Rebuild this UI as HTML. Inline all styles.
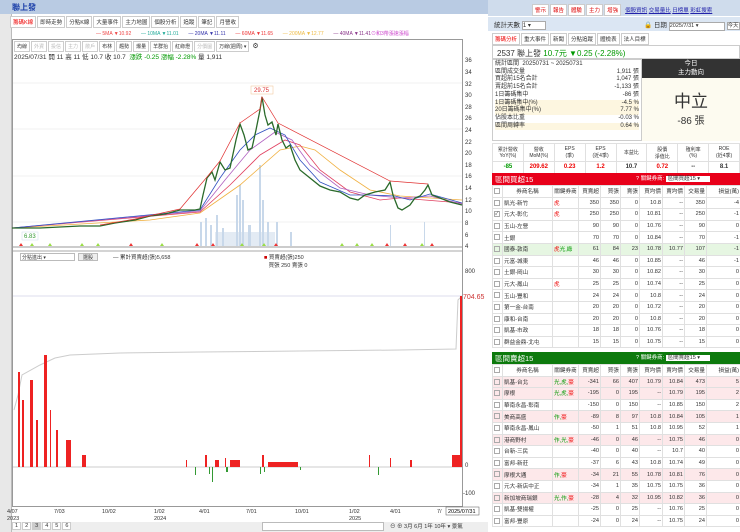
<!DOCTYPE html><html><head><meta charset="utf-8"><style>
*{box-sizing:border-box;margin:0;padding:0}
body{width:740px;height:532px;overflow:hidden;background:#fff;font-family:"Liberation Sans","Noto Sans CJK TC",sans-serif;font-size:7px;color:#333;position:relative}
.a{position:absolute}
.tab{display:inline-block;border:1px solid #ccc;padding:1px 2px;margin-right:1px;background:#fff;font-size:5.5px}
table{border-collapse:collapse;width:248px;font-size:5.6px;table-layout:fixed}
td{border:1px solid #e0e0e0;height:11.6px;padding:0 1px;text-align:right;white-space:nowrap;overflow:hidden}
td.l{text-align:left}
.cb{display:inline-block;width:6px;height:6px;border:1px solid #aaa;vertical-align:middle;font-size:5px;line-height:5px}
.r{color:#e00}.g{color:#090}
.pk td{background:#fde8ea}
</style></head><body>
<div class="a" style="left:0;top:0;width:12px;height:532px;background:#e8e8e8;border-right:1px solid #bbb"></div>
<div class="a" style="left:0;top:0;width:488px;height:14px;background:#b9cbe3"></div>
<div class="a" style="left:12px;top:2px;font-size:8px;color:#1a3ea8;font-weight:bold">聯上發</div>
<div class="a" style="left:10px;top:16px;white-space:nowrap"><span class="tab" style="color:#e00">籌碼K線</span><span class="tab">即時走勢</span><span class="tab">分點K線</span><span class="tab">大量事件</span><span class="tab">主力地圖</span><span class="tab">個股分析</span><span class="tab">追蹤</span><span class="tab">筆記</span><span class="tab">月營收</span></div>
<div class="a" style="left:96px;top:30px;font-size:5px;white-space:nowrap"><span style="color:#e44">— 5MA ▼10.92</span>&nbsp;&nbsp;&nbsp;&nbsp;&nbsp;&nbsp; <span style="color:#2a9">— 10MA ▼11.01</span>&nbsp;&nbsp;&nbsp;&nbsp;&nbsp;&nbsp; <span style="color:#33a">— 20MA ▼11.11</span>&nbsp;&nbsp;&nbsp;&nbsp;&nbsp;&nbsp; <span style="color:#e33">— 60MA ▼11.65</span>&nbsp;&nbsp;&nbsp;&nbsp;&nbsp;&nbsp; <span style="color:#eb4">— 200MA ▼12.77</span>&nbsp;&nbsp;&nbsp;&nbsp;&nbsp;&nbsp; <span style="color:#838">— 40MA ▼11.41</span><span style="color:#c4c">⊙和3帶漲速漲幅</span></div>
<div class="a" style="left:12px;top:39px;width:451px;height:468px;border:1px solid #999"></div>
<div class="a" style="left:14px;top:41px;white-space:nowrap"><span class="tab" style="font-size:5px">均線</span><span class="tab" style="font-size:5px;color:#bbb">外資</span><span class="tab" style="font-size:5px;color:#bbb">投信</span><span class="tab" style="font-size:5px;color:#bbb">主力</span><span class="tab" style="font-size:5px;color:#bbb">散戶</span><span class="tab" style="font-size:5px">布林</span><span class="tab" style="font-size:5px">趨勢</span><span class="tab" style="font-size:5px">爆量</span><span class="tab" style="font-size:5px">羊群抬</span><span class="tab" style="font-size:5px">紅綠燈</span><span class="tab" style="font-size:5px;color:#bbb">分價圖</span><span class="tab" style="font-size:5px">万線(週周) ▾</span> ⚙</div>
<div class="a" style="left:14px;top:51px;font-size:6.5px;white-space:nowrap">2025/07/31 開 11 高 11 低 10.7 收 10.7 &nbsp;<span class="g">漲跌 -0.25 漲幅 -2.28%</span> 量 1,911</div>
<svg class="a" style="left:0;top:0" width="488" height="532">
<g stroke="#f2f2f2" stroke-width="1"><line x1="13" y1="83" x2="462" y2="83"/><line x1="13" y1="129" x2="462" y2="129"/><line x1="13" y1="176" x2="462" y2="176"/><line x1="13" y1="222" x2="462" y2="222"/></g>
<g fill="#c8d8ea"><rect x="200" y="222" width="2" height="24"/><rect x="205" y="218" width="2" height="28"/><rect x="210" y="225" width="2" height="21"/><rect x="216" y="215" width="2" height="31"/><rect x="222" y="228" width="2" height="18"/><rect x="236" y="195" width="2" height="51"/><rect x="239" y="185" width="2" height="61"/><rect x="242" y="200" width="2" height="46"/><rect x="248" y="225" width="3" height="21"/><rect x="259" y="165" width="2" height="81"/><rect x="262" y="200" width="2" height="46"/><rect x="267" y="222" width="2" height="24"/><rect x="276" y="222" width="2" height="24"/><rect x="290" y="232" width="2" height="14"/><rect x="390" y="225" width="1" height="21"/><rect x="424" y="222" width="1" height="24"/><rect x="215" y="232" width="60" height="14" opacity=".5"/></g>
<polyline fill="none" stroke="#f0b040" stroke-width=".8" points="12,228 150,220 200,213 240,185 280,150 300,146 315,150 340,170 370,190 400,196 462,200"/>
<polyline fill="none" stroke="#e04060" stroke-width=".8" points="12,228 200,212 230,185 260,155 285,140 300,145 320,170 350,192 380,200 400,198 462,203"/>
<polyline fill="none" stroke="#b060c0" stroke-width=".8" points="12,228 200,211 225,180 250,150 275,132 292,140 310,165 340,188 370,195 400,198 430,196 462,204"/>
<polyline fill="none" stroke="#3050c0" stroke-width=".8" points="12,228 200,210 220,178 240,150 255,135 270,128 285,135 300,160 320,182 350,195 370,195 395,196 410,200 430,194 462,203"/>
<polyline fill="none" stroke="#2a6a2a" stroke-width="1.3" points="12,228 40,228 60,227 80,226 100,226 115,223 135,220 150,216 165,214 180,210 195,210 200,209 203,195 207,178 212,172 215,180 220,162 225,170 230,168 236,140 240,124 244,135 248,150 252,148 256,130 260,110 262,97 265,115 268,125 272,122 276,135 278,124 282,140 286,148 290,145 295,160 300,170 310,178 320,186 330,190 340,192 350,198 358,200 365,195 375,192 385,190 390,182 393,195 398,208 402,210 410,205 415,198 420,196 425,190 428,185 432,195 440,198 450,202 462,205"/>
<polyline fill="none" stroke="#e03030" stroke-width="0.7" points="100,225 135,219 180,209 207,177 220,161 240,123 260,109 262,97 278,123 390,181 428,184"/>
<rect x="251" y="86" width="22" height="8" fill="#fff" stroke="#f0c090" stroke-width=".5"/><text x="254" y="92" font-size="6" fill="#d33">29.75</text>
<rect x="22" y="232" width="16" height="8" fill="#fff" stroke="#cde" stroke-width=".5"/><text x="24" y="238" font-size="6" fill="#393">6.83</text>
<line x1="13" y1="247" x2="462" y2="247" stroke="#999"/>
<g font-size="6" fill="#333"><text x="465" y="62">36</text><text x="465" y="74">34</text><text x="465" y="86">32</text><text x="465" y="97">30</text><text x="465" y="109">28</text><text x="465" y="120">26</text><text x="465" y="132">24</text><text x="465" y="144">22</text><text x="465" y="155">20</text><text x="465" y="167">18</text><text x="465" y="178">16</text><text x="465" y="190">14</text><text x="465" y="202">12</text><text x="465" y="213">10</text><text x="465" y="225">8</text><text x="465" y="237">6</text><text x="465" y="248">4</text>
<text x="465" y="273">800</text><text x="465" y="467">0</text><text x="463" y="495">-100</text></g>
<g fill="#e33"><path d="M19 246l2-3 2 3zM129 246l2-3 2 3zM195 246l2-3 2 3zM211 246l2-3 2 3zM274 246l2-3 2 3zM385 246l2-3 2 3zM403 246l2-3 2 3zM430 246l2-3 2 3z"/></g>
<g fill="#9d4"><path d="M30 246l2-3 2 3zM48 246l2-3 2 3zM80 246l2-3 2 3zM96 246l2-3 2 3zM160 246l2-3 2 3zM240 246l2-3 2 3zM262 246l2-3 2 3zM340 246l2-3 2 3zM355 246l2-3 2 3zM370 246l2-3 2 3zM420 246l2-3 2 3z"/></g>
<line x1="13" y1="251" x2="462" y2="251" stroke="#aaa"/>
<line x1="13" y1="296" x2="462" y2="296" stroke="#dde"/>
<polyline fill="none" stroke="#ccc" points="14,410 18,395 22,375 40,365 55,358 70,355 120,353 200,352 300,351 400,350 456,349 458,300 462,296"/>
<line x1="13" y1="467" x2="462" y2="467" stroke="#ccc"/>
<g fill="#e22"><rect x="18" y="372" width="2" height="95"/><rect x="22" y="400" width="2" height="67"/><rect x="30" y="380" width="3" height="87"/><rect x="36" y="420" width="2" height="47"/><rect x="44" y="355" width="3" height="112"/><rect x="50" y="410" width="1" height="57"/><rect x="56" y="430" width="2" height="37"/><rect x="66" y="440" width="5" height="27"/><rect x="82" y="455" width="4" height="12"/><rect x="186" y="460" width="1" height="7"/><rect x="205" y="455" width="2" height="12"/><rect x="215" y="460" width="4" height="7"/><rect x="225" y="458" width="1" height="9"/><rect x="230" y="460" width="10" height="7"/><rect x="262" y="455" width="2" height="12"/><rect x="268" y="462" width="30" height="5"/><rect x="369" y="455" width="1" height="12"/><rect x="390" y="458" width="1" height="9"/><rect x="410" y="460" width="2" height="7"/><rect x="452" y="455" width="8" height="12"/><rect x="460" y="296" width="2" height="171"/></g>
<g fill="#393"><rect x="195" y="467" width="1" height="8"/><rect x="209" y="467" width="1" height="7"/><rect x="212" y="467" width="1" height="15"/><rect x="226" y="467" width="2" height="5"/><rect x="260" y="467" width="1" height="7"/><rect x="264" y="467" width="1" height="5"/><rect x="378" y="467" width="1" height="8"/><rect x="300" y="467" width="1" height="3"/></g>
<text x="463" y="299" font-size="7" fill="#c33">704.65</text>
<g font-size="5.5" fill="#333"><text x="7" y="513">4/07</text><text x="7" y="520">2023</text><text x="54" y="513">7/03</text><text x="102" y="513">10/02</text><text x="154" y="513">1/02</text><text x="154" y="520">2024</text><text x="199" y="513">4/01</text><text x="246" y="513">7/01</text><text x="295" y="513">10/01</text><text x="349" y="513">1/02</text><text x="349" y="520">2025</text><text x="390" y="513">4/01</text><text x="437" y="513">7/</text></g>
<rect x="446" y="507" width="33" height="8" fill="#fff" stroke="#555" stroke-width=".5"/><text x="448" y="513" font-size="5.5">2025/07/31</text>
</svg>
<div class="a" style="left:20px;top:253px;width:55px;height:8px;border:1px solid #bbb;font-size:5px;padding-left:1px">分點進出 ▾</div>
<div class="a" style="left:78px;top:253px;width:20px;height:8px;border:1px solid #bbb;background:#eee;font-size:5px;text-align:center">選股</div>
<div class="a" style="left:113px;top:253px;font-size:5.5px">— 累計買賣超(張)5,658</div>
<div class="a" style="left:264px;top:253px;font-size:5.5px"><span style="color:#c00">■</span> 買賣超(張)250<br>&nbsp;&nbsp;&nbsp;買張 250 賣張 0</div>
<div class="a" style="left:12px;top:522px;width:476px;height:10px;background:#eee;font-size:6px;white-space:nowrap"><span class="tab" style="padding:0 2px">1</span><span class="tab" style="padding:0 2px">2</span><span class="tab" style="padding:0 2px;background:#ccc">3</span><span class="tab" style="padding:0 2px">4</span><span class="tab" style="padding:0 2px">5</span><span class="tab" style="padding:0 2px">6</span>
<span style="position:absolute;left:250px;top:0;width:122px;height:9px;border:1px solid #bbb;background:#fff"></span><span style="position:absolute;left:378px;top:0;font-size:5.5px">⊖ ⊕ 3月 6月 1年 10年 ▾ 景氣</span></div>

<div class="a" style="left:488px;top:0;width:252px;height:16px;background:#cfdcec"></div>
<div class="a" style="left:532px;top:4px;font-size:5.5px;white-space:nowrap"><span class="tab" style="color:#d00">警示</span><span class="tab" style="color:#d00">報告</span><span class="tab" style="color:#d00">體驗</span><span class="tab" style="color:#d00">主力</span><span class="tab" style="color:#d00">增強</span> &nbsp;<u style="color:#22a">個股資訊</u> <u style="color:#22a">交易量比</u> <u style="color:#22a">日榜單</u> <u style="color:#22a">彩虹搜索</u></div>
<div class="a" style="left:488px;top:17px;width:252px;height:14px;background:#dbe6f3"></div>
<div class="a" style="left:494px;top:19px;font-size:6.5px">統計天數 <span style="display:inline-block;width:24px;height:9px;border:1px solid #aaa;background:#fff;font-size:6px">1 ▾</span></div>
<div class="a" style="left:644px;top:19px;font-size:6.5px;white-space:nowrap">🔒 日期 <span style="display:inline-block;width:56px;height:9px;border:1px solid #aaa;background:#fff;font-size:5.5px">2025/7/31 ▾</span> <span style="border:1px solid #aaa;background:#fff;font-size:5.5px">今天</span></div>
<div class="a" style="left:492px;top:33px;white-space:nowrap"><span class="tab" style="color:#e00">籌碼分析</span><span class="tab">重大事件</span><span class="tab">新聞</span><span class="tab">分點追蹤</span><span class="tab">體檢表</span><span class="tab">法人目標</span></div>
<div class="a" style="left:492px;top:45px;width:248px;height:14px;border:1px solid #ccc;font-size:8px;padding:2px 4px;white-space:nowrap">2537 聯上發 <span class="g">10.7元 ▼0.25 (-2.28%)</span></div>
<div class="a" style="left:492px;top:59px;width:150px;height:82px;border:1px solid #ccc;font-size:6px;line-height:7.7px;padding:1px 2px">
<div>統計區間 &nbsp;20250731 ~ 20250731</div>
<div>區間成交量<span style="float:right">1,911 張</span></div>
<div>買超前15名合計<span style="float:right">1,047 張</span></div>
<div>賣超前15名合計<span style="float:right">-1,133 張</span></div>
<div>1日籌碼集中<span style="float:right">-86 張</span></div>
<div style="background:#fdf6e0">1日籌碼集中(%)<span style="float:right">-4.5 %</span></div>
<div style="background:#fdf6e0">20日籌碼集中(%)<span style="float:right">7.77 %</span></div>
<div>佔股本比重<span style="float:right">-0.03 %</span></div>
<div style="background:#fdf6e0">區間周轉率<span style="float:right">0.64 %</span></div></div>
<div class="a" style="left:642px;top:59px;width:98px;height:19px;background:#333;color:#fff;text-align:center;font-size:6.5px;line-height:9px">今日<br>主力動向</div>
<div class="a" style="left:642px;top:78px;width:98px;height:63px;background:#fdfbf0;text-align:center;padding-top:9px"><div style="font-size:17px">中立</div><div style="font-size:10px">-86 張</div></div>
<div class="a" style="left:492px;top:143px;width:248px;height:30px">
<table style="font-size:5px"><tr style="height:18px"><td style="text-align:center">累計營收<br>YoY(%)</td><td style="text-align:center">營收<br>MoM(%)</td><td style="text-align:center">EPS<br>(季)</td><td style="text-align:center">EPS<br>(近4季)</td><td style="text-align:center">本益比</td><td style="text-align:center">股價<br>淨值比</td><td style="text-align:center">殖利率<br>(%)</td><td style="text-align:center">ROE<br>(近4季)</td></tr>
<tr style="font-weight:bold;font-size:6px"><td style="text-align:center" class="g">-85</td><td style="text-align:center" class="r">209.62</td><td style="text-align:center" class="r">0.23</td><td style="text-align:center" class="r">1.2</td><td style="text-align:center">10.7</td><td style="text-align:center" class="r">0.72</td><td style="text-align:center">--</td><td style="text-align:center">8.1</td></tr></table></div>
<div class="a" style="left:492px;top:173px;width:248px;height:12px;background:#e8001a;color:#fff;font-size:7.5px;padding:1px 3px">區間買超15<span style="position:absolute;left:144px;top:1px;font-size:5.5px">? 關鍵券商: <span style="background:#fff;color:#333;padding:0 10px 0 2px">區間買超15 ▾</span></span></div>
<div class="a" style="left:492px;top:185px;width:248px">
<table><colgroup><col style="width:10px"><col style="width:50px"><col style="width:26px"><col style="width:22px"><col style="width:20px"><col style="width:19px"><col style="width:23px"><col style="width:22px"><col style="width:22px"><col style="width:34px"></colgroup>
<tr><td class="l"><span class="cb"></span></td><td style="text-align:center">券商名稱</td><td style="text-align:center">關鍵券商</td><td>買賣超</td><td>買張</td><td>賣張</td><td>買均價</td><td>賣均價</td><td>交易量</td><td>損益(萬)</td></tr>
<tr><td class="l"><span class="cb"></span></td><td class="l">凱光-新竹</td><td class="l r">虎</td><td>350</td><td>350</td><td>0</td><td>10.8</td><td>--</td><td>350</td><td>-4</td></tr>
<tr><td class="l"><span class="cb">✓</span></td><td class="l">元大-彰化</td><td class="l r">虎</td><td>250</td><td>250</td><td>0</td><td>10.81</td><td>--</td><td>250</td><td>-1</td></tr>
<tr><td class="l"><span class="cb"></span></td><td class="l">玉山-左營</td><td></td><td>90</td><td>90</td><td>0</td><td>10.76</td><td>--</td><td>90</td><td>0</td></tr>
<tr><td class="l"><span class="cb"></span></td><td class="l">土銀</td><td></td><td>70</td><td>70</td><td>0</td><td>10.84</td><td>--</td><td>70</td><td>-1</td></tr>
<tr style="background:#e6f6e2"><td class="l"><span class="cb"></span></td><td class="l">國泰-敦南</td><td class="l"><span class="r">虎</span><span class="g">光,綠</span></td><td>61</td><td>84</td><td>23</td><td>10.78</td><td>10.77</td><td>107</td><td>-1</td></tr>
<tr><td class="l"><span class="cb"></span></td><td class="l">元富-城東</td><td></td><td>46</td><td>46</td><td>0</td><td>10.85</td><td>--</td><td>46</td><td>-1</td></tr>
<tr><td class="l"><span class="cb"></span></td><td class="l">土銀-岡山</td><td></td><td>30</td><td>30</td><td>0</td><td>10.82</td><td>--</td><td>30</td><td>0</td></tr>
<tr><td class="l"><span class="cb"></span></td><td class="l">元大-鳳山</td><td class="l r">虎</td><td>25</td><td>25</td><td>0</td><td>10.74</td><td>--</td><td>25</td><td>0</td></tr>
<tr><td class="l"><span class="cb"></span></td><td class="l">玉山-豐和</td><td></td><td>24</td><td>24</td><td>0</td><td>10.8</td><td>--</td><td>24</td><td>0</td></tr>
<tr><td class="l"><span class="cb"></span></td><td class="l">第一金-台南</td><td></td><td>20</td><td>20</td><td>0</td><td>10.72</td><td>--</td><td>20</td><td>0</td></tr>
<tr><td class="l"><span class="cb"></span></td><td class="l">康和-台南</td><td></td><td>20</td><td>20</td><td>0</td><td>10.8</td><td>--</td><td>20</td><td>0</td></tr>
<tr><td class="l"><span class="cb"></span></td><td class="l">凱基-市政</td><td></td><td>18</td><td>18</td><td>0</td><td>10.76</td><td>--</td><td>18</td><td>0</td></tr>
<tr><td class="l"><span class="cb"></span></td><td class="l">群益金鼎-北屯</td><td></td><td>15</td><td>15</td><td>0</td><td>10.75</td><td>--</td><td>15</td><td>0</td></tr></table></div>
<div class="a" style="left:492px;top:352px;width:248px;height:12px;background:#0d7a0d;color:#fff;font-size:7.5px;padding:1px 3px">區間賣超15<span style="position:absolute;left:144px;top:1px;font-size:5.5px">? 關鍵券商: <span style="background:#fff;color:#333;padding:0 10px 0 2px">區間賣超15 ▾</span></span></div>
<div class="a" style="left:492px;top:364px;width:248px">
<table><colgroup><col style="width:10px"><col style="width:50px"><col style="width:26px"><col style="width:22px"><col style="width:20px"><col style="width:19px"><col style="width:23px"><col style="width:22px"><col style="width:22px"><col style="width:34px"></colgroup>
<tr><td class="l"><span class="cb"></span></td><td style="text-align:center">券商名稱</td><td style="text-align:center">關鍵券商</td><td>買賣超</td><td>買張</td><td>賣張</td><td>買均價</td><td>賣均價</td><td>交易量</td><td>損益(萬)</td></tr>
<tr class="pk"><td class="l"><span class="cb"></span></td><td class="l">凱基-台北</td><td class="l"><span class="g">光,虎,</span><span class="r">豪</span></td><td>-341</td><td>66</td><td>407</td><td>10.79</td><td>10.84</td><td>473</td><td>5</td></tr>
<tr class="pk"><td class="l"><span class="cb"></span></td><td class="l">摩根</td><td class="l"><span class="g">光,虎,</span><span class="r">豪</span></td><td>-195</td><td>0</td><td>195</td><td>--</td><td>10.79</td><td>195</td><td>2</td></tr>
<tr><td class="l"><span class="cb"></span></td><td class="l">華南永昌-彰南</td><td></td><td>-150</td><td>0</td><td>150</td><td>--</td><td>10.85</td><td>150</td><td>2</td></tr>
<tr class="pk"><td class="l"><span class="cb"></span></td><td class="l">美商高盛</td><td class="l"><span class="g">作,</span><span class="r">豪</span></td><td>-89</td><td>8</td><td>97</td><td>10.8</td><td>10.84</td><td>105</td><td>1</td></tr>
<tr><td class="l"><span class="cb"></span></td><td class="l">華南永昌-鳳山</td><td></td><td>-50</td><td>1</td><td>51</td><td>10.8</td><td>10.95</td><td>52</td><td>1</td></tr>
<tr class="pk"><td class="l"><span class="cb"></span></td><td class="l">港商野村</td><td class="l"><span class="g">作,光,</span><span class="r">豪</span></td><td>-46</td><td>0</td><td>46</td><td>--</td><td>10.75</td><td>46</td><td>0</td></tr>
<tr><td class="l"><span class="cb"></span></td><td class="l">台新-三民</td><td></td><td>-40</td><td>0</td><td>40</td><td>--</td><td>10.7</td><td>40</td><td>0</td></tr>
<tr><td class="l"><span class="cb"></span></td><td class="l">富邦-新莊</td><td></td><td>-37</td><td>6</td><td>43</td><td>10.8</td><td>10.74</td><td>49</td><td>0</td></tr>
<tr class="pk"><td class="l"><span class="cb"></span></td><td class="l">摩根大通</td><td class="l"><span class="g">作,</span><span class="r">豪</span></td><td>-34</td><td>21</td><td>55</td><td>10.78</td><td>10.81</td><td>76</td><td>0</td></tr>
<tr><td class="l"><span class="cb"></span></td><td class="l">元大-新店中正</td><td></td><td>-34</td><td>1</td><td>35</td><td>10.75</td><td>10.75</td><td>36</td><td>0</td></tr>
<tr class="pk"><td class="l"><span class="cb"></span></td><td class="l">新加坡商瑞銀</td><td class="l"><span class="g">光,作,</span><span class="r">豪</span></td><td>-28</td><td>4</td><td>32</td><td>10.95</td><td>10.82</td><td>36</td><td>0</td></tr>
<tr><td class="l"><span class="cb"></span></td><td class="l">凱基-雙揚權</td><td></td><td>-25</td><td>0</td><td>25</td><td>--</td><td>10.76</td><td>25</td><td>0</td></tr>
<tr><td class="l"><span class="cb"></span></td><td class="l">富邦-豐原</td><td></td><td>-24</td><td>0</td><td>24</td><td>--</td><td>10.75</td><td>24</td><td>0</td></tr></table></div>
</body></html>
